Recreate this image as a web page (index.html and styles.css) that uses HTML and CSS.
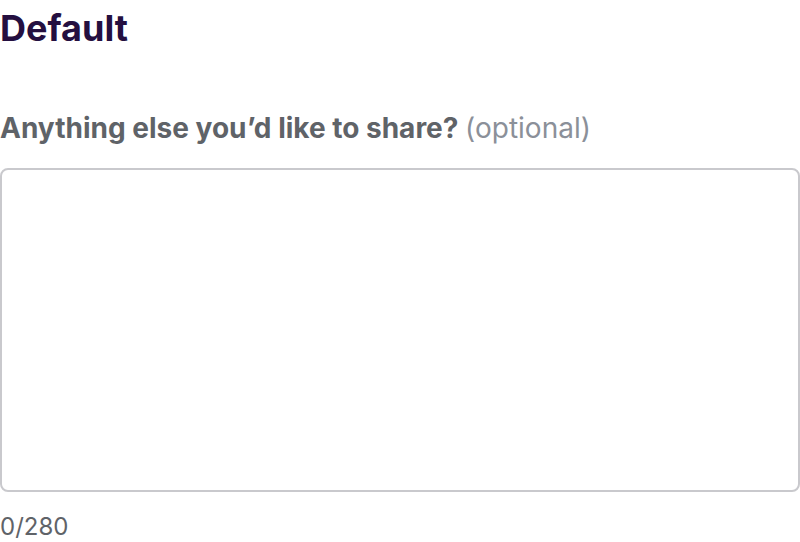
FILE: index.html
```html
<!DOCTYPE html>
<html>
<head>
<meta charset="utf-8">
<link rel="stylesheet" href="styles.css">
</head>
<body>
<main class="page">
  <h1 class="title">Default</h1>
  <div class="field">
    <label class="label" for="share">Anything else you’d like to share? <span class="optional">(optional)</span></label>
    <textarea id="share" class="input" maxlength="280"></textarea>
    <div class="counter">0/280</div>
  </div>
</main>
</body>
</html>
```
FILE: styles.css
```css
html, body {
  margin: 0;
  padding: 0;
  background: #ffffff;
}
body {
  font-family: Inter, "Noto Sans", sans-serif;
  width: 800px;
  height: 542px;
  overflow: hidden;
}
.page {
  display: flex;
  flex-direction: column;
}
.title {
  margin: 6px 0 0 0;
  font-size: 36px;
  font-weight: 700;
  line-height: 44px;
  color: #240f40;
}
.field {
  display: flex;
  flex-direction: column;
  margin-top: 61px;
}
.label {
  font-size: 28px;
  font-weight: 700;
  line-height: 34px;
  color: #5f6368;
}
.optional {
  font-weight: 400;
  color: #8b9099;
}
.input {
  box-sizing: border-box;
  margin-top: 23px;
  width: 800px;
  height: 324px;
  border: 2px solid #c9c9cd;
  border-radius: 8px;
  resize: none;
  outline: none;
  font: inherit;
}
.counter {
  margin-top: 20px;
  font-size: 24px;
  line-height: 29px;
  color: #5f6368;
}
```
